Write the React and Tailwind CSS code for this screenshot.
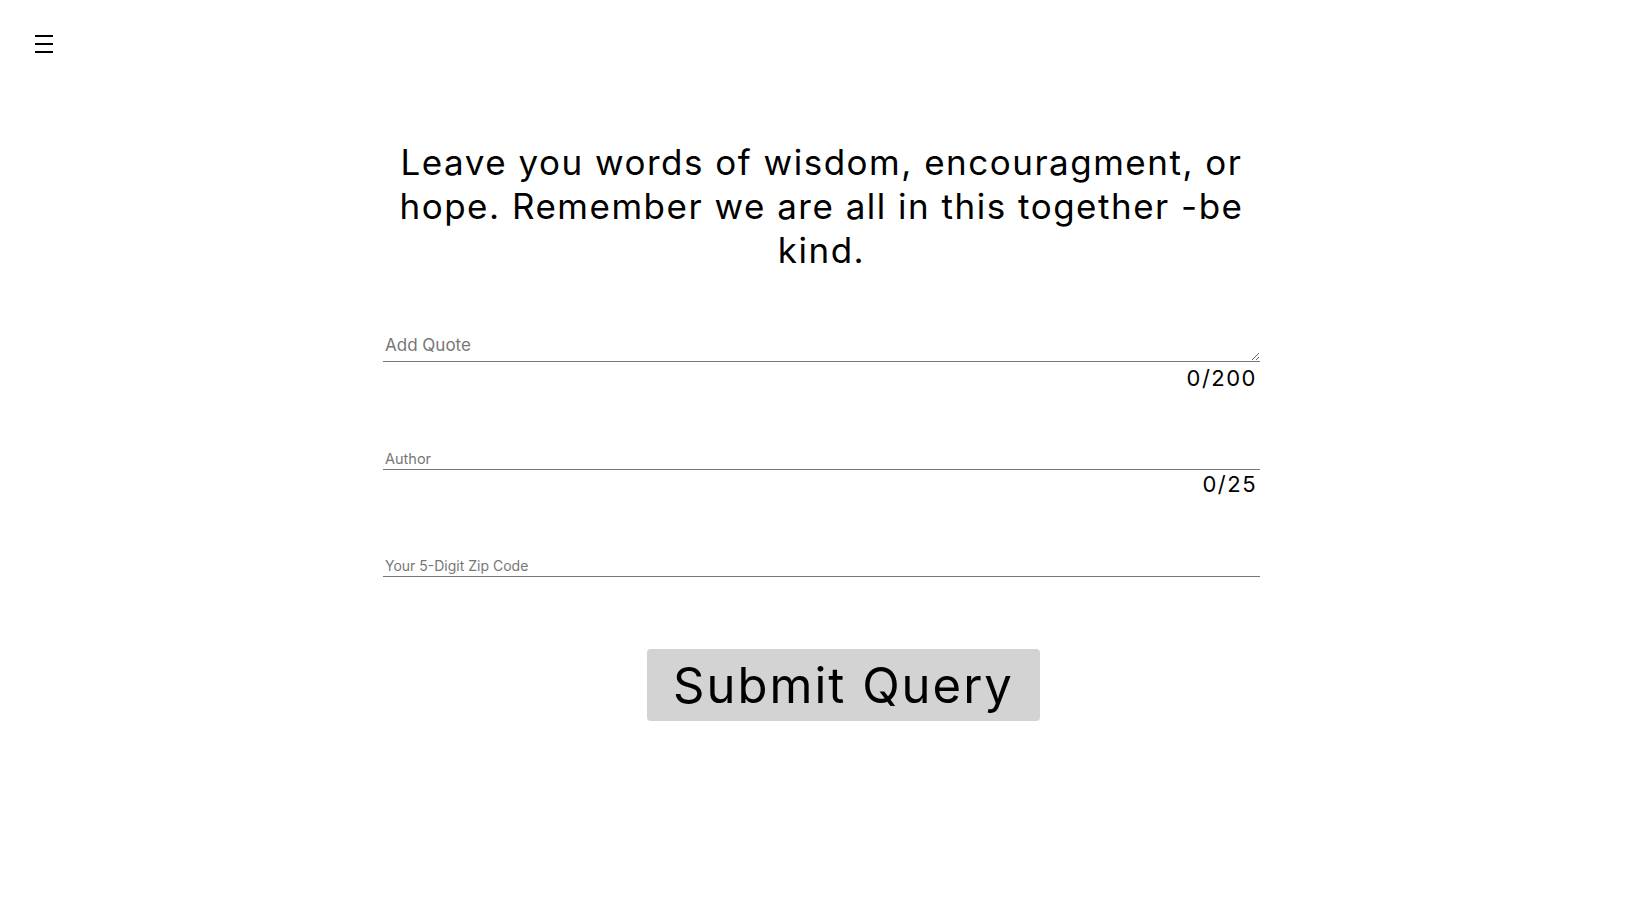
import React, { useState } from 'react';

const App = () => {
    const [quote, setQuote] = useState('');
    const [author, setAuthor] = useState('');
    const [zip, setZip] = useState('');

    return (
        <div className="min-h-screen bg-white text-black font-['Inter',sans-serif]">
            <header className="pl-[35px] pt-[35px]">
                <button className="flex flex-col gap-[6px] w-[18px]">
                    <span className="block h-[2px] w-[18px] bg-black"></span>
                    <span className="block h-[2px] w-[18px] bg-black"></span>
                    <span className="block h-[2px] w-[18px] bg-black"></span>
                </button>
            </header>

            <main className="ml-[383px] w-[877px]">
                <h1 className="mt-[87px] text-center text-[35px] leading-[44px] tracking-[1.5px] font-normal">
                    Leave you words of wisdom, encouragment, or<br />
                    hope. Remember we are all in this together -be<br />
                    kind.
                </h1>

                <form onSubmit={e => e.preventDefault()}>
                    <textarea
                        rows="1"
                        placeholder="Add Quote"
                        maxLength={200}
                        value={quote}
                        onChange={e => setQuote(e.target.value)}
                        className="mt-[60px] block w-full h-[30px] px-[2px] pt-[1px] text-[17px] border-b border-[#777] outline-none placeholder:text-[#777]"
                    />
                    <div className="mt-[4px] pr-[3px] text-right text-[22px] leading-[24px] tracking-[1.5px]">{quote.length}/200</div>

                    <input
                        type="text"
                        placeholder="Author"
                        maxLength={25}
                        value={author}
                        onChange={e => setAuthor(e.target.value)}
                        className="mt-[58px] block w-full h-[22px] px-[2px] text-[14.5px] border-b border-[#777] outline-none placeholder:text-[#777]"
                    />
                    <div className="mt-[2px] pr-[3px] text-right text-[22px] leading-[24px] tracking-[1.5px]">{author.length}/25</div>

                    <input
                        type="text"
                        placeholder="Your 5-Digit Zip Code"
                        maxLength={5}
                        value={zip}
                        onChange={e => setZip(e.target.value)}
                        className="mt-[59px] block w-full h-[22px] px-[2px] text-[14px] border-b border-[#777] outline-none placeholder:text-[#777]"
                    />

                    <button
                        type="submit"
                        className="mt-[72px] ml-[264px] w-[393px] h-[72px] rounded-[4px] bg-[#d3d3d3] text-[49px] leading-none tracking-[2px]"
                    >
                        Submit Query
                    </button>
                </form>
            </main>
        </div>
    );
};

export default App;
